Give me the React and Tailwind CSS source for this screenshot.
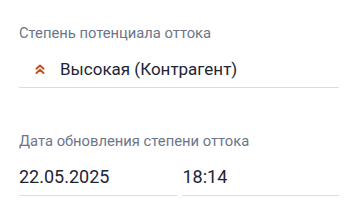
export default function App() {
  return (
    <div className="w-[355px] h-[221px] bg-white px-[19px] pt-[24px] font-['Roboto',sans-serif]">
      <div className="w-[320px]">
        <div className="text-[14.75px] leading-[18px] text-[#6b7689]">Степень потенциала оттока</div>
        <div className="mt-[12px] flex items-center h-[34px] border-b border-[#d9dce1] pb-[4px]">
          <svg
            viewBox="0 0 12 12"
            className="ml-[15px] w-[12px] h-[12px] text-[#c8501e]"
            fill="none"
            stroke="currentColor"
            strokeWidth="2"
            strokeLinecap="round"
            strokeLinejoin="round"
          >
            <path d="M2.5 5.8 L6 2.6 L9.5 5.8" />
            <path d="M2.5 10 L6 6.8 L9.5 10" />
          </svg>
          <span className="ml-[14px] text-[17px] leading-[22px] text-[#1e2535]">Высокая (Контрагент)</span>
        </div>
        <div className="mt-[44px] text-[14.75px] leading-[18px] text-[#6b7689]">Дата обновления степени оттока</div>
        <div className="mt-[12px] flex gap-[5px]">
          <div className="flex-1 h-[34px] flex items-center border-b border-[#d9dce1] pb-[4px]">
            <span className="text-[18px] leading-[22px] text-[#1e2535]">22.05.2025</span>
          </div>
          <div className="flex-1 h-[34px] flex items-center border-b border-[#d9dce1] pb-[4px]">
            <span className="ml-px text-[18px] leading-[22px] text-[#1e2535]">18:14</span>
          </div>
        </div>
      </div>
    </div>
  );
}
